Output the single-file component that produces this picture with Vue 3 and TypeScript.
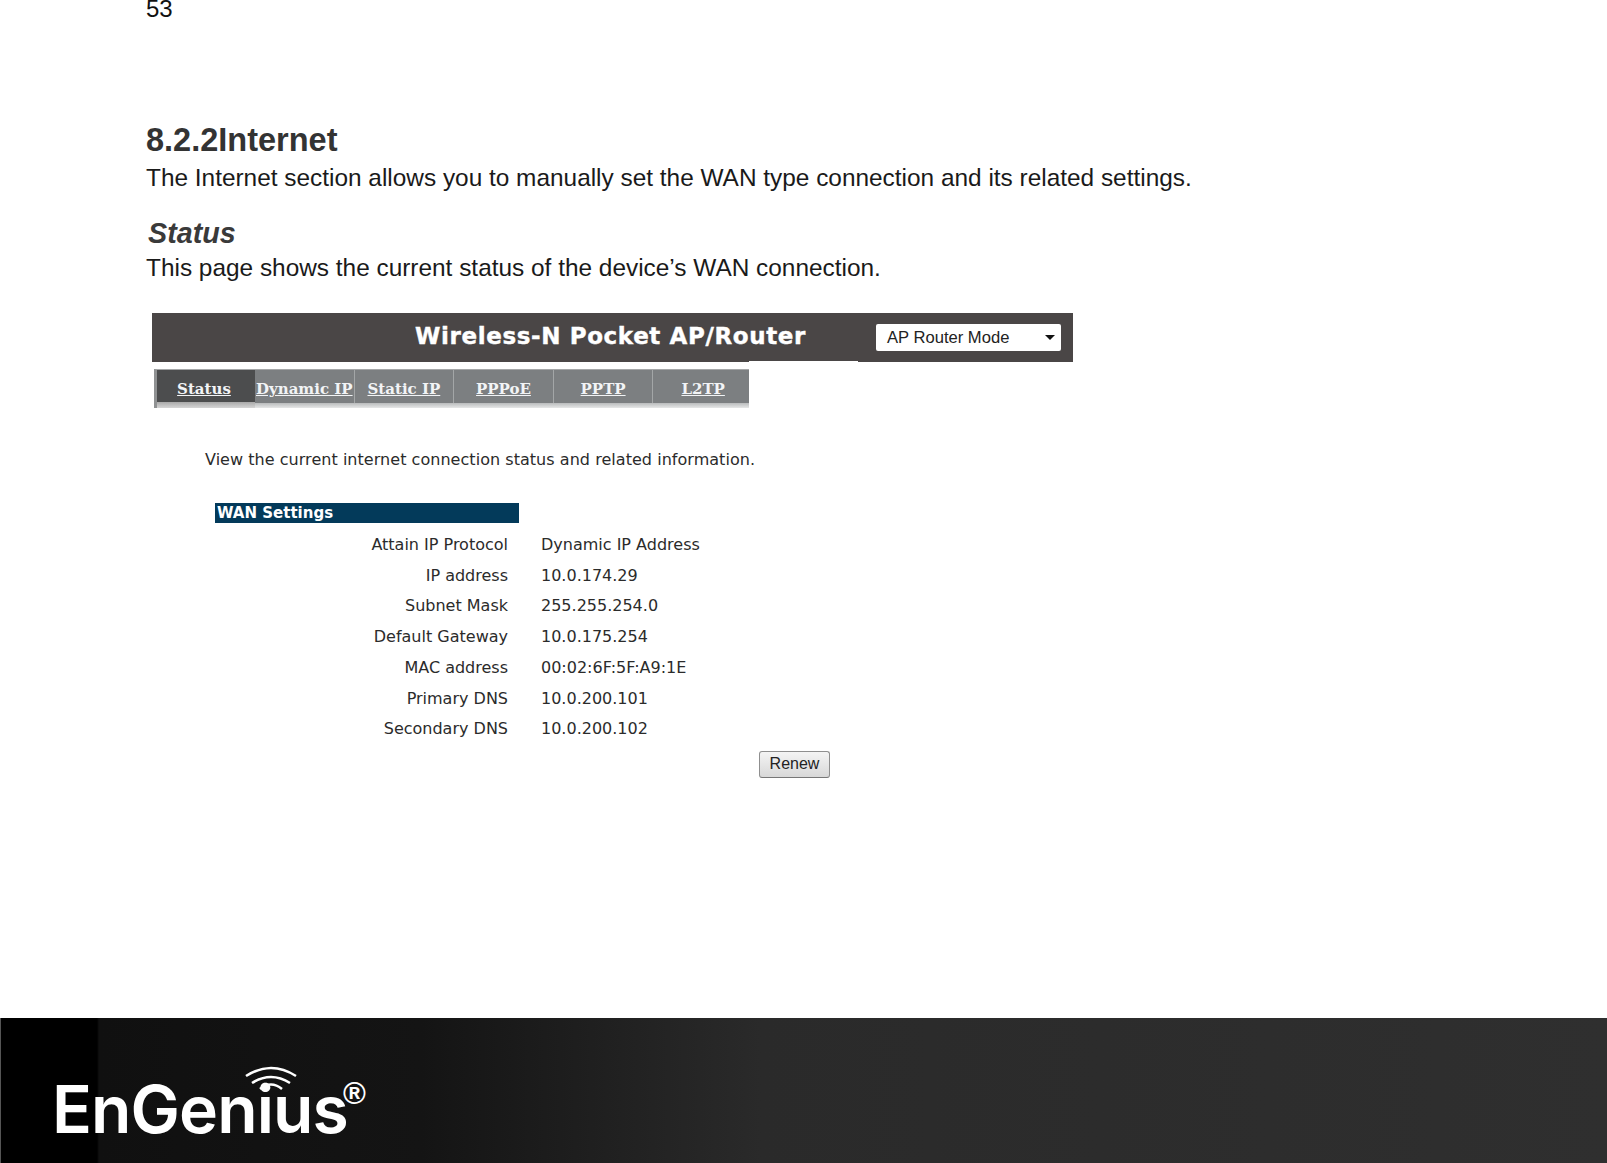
<template>
  <div class="page">
    <main class="doc">
      <div class="page-no">53</div>
      <h1 class="title">8.2.2Internet</h1>
      <p class="body-text first">The Internet section allows you to manually set the WAN type connection and its related settings.</p>
      <h2 class="subtitle">Status</h2>
      <p class="body-text">This page shows the current status of the device’s WAN connection.</p>

      <section class="shot">
        <div class="banner">
          <div class="banner-title">Wireless-N Pocket AP/Router</div>
          <div class="mode-select">
            <span>AP Router Mode</span>
            <i class="caret"></i>
          </div>
          <div class="banner-notch"></div>
        </div>

        <nav class="tabs">
          <a v-for="(t, i) in tabs" :key="t" class="tab" :class="{ active: i === 0 }">{{ t }}</a>
        </nav>

        <p class="intro">View the current internet connection status and related information.</p>

        <div class="wan-head">WAN Settings</div>
        <div class="wan-table">
          <template v-for="r in rows" :key="r[0]">
            <div class="label">{{ r[0] }}</div>
            <div class="value">{{ r[1] }}</div>
          </template>
        </div>
        <div class="btn-row">
          <button class="renew">Renew</button>
        </div>
      </section>
    </main>

    <footer class="footer">
      <div class="logo">
        <span class="logo-text">EnGenius</span>
        <span class="logo-reg">®</span>
        <svg class="wifi" width="60" height="30" viewBox="0 0 60 30" fill="none" stroke="#fff" stroke-width="2.6">
          <path d="M5 11 Q30 -5 55 11" />
          <path d="M11 18 Q30 6 49 18" />
          <path d="M19 24 Q30 15 41 24" />
        </svg>
      </div>
    </footer>
  </div>
</template>

<script setup lang="ts">
const tabs: string[] = ['Status', 'Dynamic IP', 'Static IP', 'PPPoE', 'PPTP', 'L2TP']

const rows: [string, string][] = [
  ['Attain IP Protocol', 'Dynamic IP Address'],
  ['IP address', '10.0.174.29'],
  ['Subnet Mask', '255.255.254.0'],
  ['Default Gateway', '10.0.175.254'],
  ['MAC address', '00:02:6F:5F:A9:1E'],
  ['Primary DNS', '10.0.200.101'],
  ['Secondary DNS', '10.0.200.102'],
]
</script>

<style>
html,
body {
  margin: 0;
  background: #fff;
}
</style>

<style scoped>
.page {
  width: 1607px;
  height: 1163px;
  display: flex;
  flex-direction: column;
  overflow: hidden;
  font-family: 'Liberation Sans', Arial, sans-serif;
  background: #fff;
}

.doc {
  flex: 1;
  padding-left: 146px;
}

.page-no {
  height: 20px;
  font-size: 24px;
  line-height: 18px;
  color: #111;
}

.title {
  margin: 99px 0 0;
  font-size: 32.5px;
  line-height: 42px;
  font-weight: 700;
  color: #333;
}

.body-text {
  margin: 0;
  font-size: 24.4px;
  line-height: 32px;
  color: #1a1a1a;
}

.body-text.first {
  margin-top: 1px;
}

.subtitle {
  margin: 21px 0 1px 2px;
  font-size: 28.7px;
  line-height: 36px;
  font-weight: 700;
  font-style: italic;
  color: #3a3a3a;
}

.shot {
  margin: 29px 0 0 6px;
  width: 921px;
}

.banner {
  position: relative;
  height: 49px;
  background: #4a4646;
  display: flex;
  align-items: center;
  padding-left: 263px;
}

.banner-title {
  width: 461px;
  margin-top: -4px;
  font-family: 'DejaVu Sans', sans-serif;
  font-weight: 700;
  font-size: 23px;
  letter-spacing: 0.62px;
  -webkit-text-stroke: 0.4px #fff;
  color: #fff;
}

.banner-notch {
  position: absolute;
  left: 597px;
  bottom: 0;
  width: 109px;
  height: 1px;
  background: #fff;
}

.mode-select {
  width: 185px;
  height: 27px;
  box-sizing: border-box;
  background: #fff;
  border-radius: 2px;
  display: flex;
  align-items: center;
  justify-content: space-between;
  padding: 0 6px 0 11px;
  font-size: 16.6px;
  color: #222;
}

.caret {
  width: 0;
  height: 0;
  border-left: 5px solid transparent;
  border-right: 5px solid transparent;
  border-top: 5px solid #111;
}

.tabs {
  margin: 7px 0 0 2px;
  width: 595px;
  height: 39px;
  box-sizing: border-box;
  display: flex;
  background: linear-gradient(#7c7f81 0 33px, #b9bbbc 33px, #e6e7e7 100%);
  border-top: 1px solid #a5a7a8;
  border-left: 3px solid #8f9192;
}

.tab {
  flex: 0 0 99.6px;
  min-width: 0;
  box-sizing: border-box;
  height: 33px;
  padding-top: 4px;
  border-right: 1px solid #a3a6a7;
  display: flex;
  align-items: center;
  justify-content: center;
  font-family: 'DejaVu Serif', serif;
  font-weight: 700;
  font-size: 15px;
  white-space: nowrap;
  color: #f2f4f6;
  text-decoration: underline;
}

.tab.active {
  flex-basis: 98px;
  height: 38px;
  padding: 4px 4px 5px 0;
  background: linear-gradient(#4c4d4e 0 32px, #a9a9a9 32px, #d6d6d6 100%);
  border-right: 0;
}

.tab:last-child {
  border-right: 0;
}

.intro {
  margin: 41px 0 0 53px;
  font-family: 'DejaVu Sans', sans-serif;
  font-size: 16px;
  letter-spacing: 0.04px;
  line-height: 22px;
  color: #2b2b2b;
}

.wan-head {
  margin: 32px 0 0 63px;
  width: 304px;
  height: 20px;
  line-height: 20px;
  box-sizing: border-box;
  padding-left: 2px;
  background: #033a5a;
  font-family: 'DejaVu Sans', sans-serif;
  font-weight: 700;
  font-size: 15px;
  white-space: nowrap;
  color: #fff;
}

.wan-table {
  margin-top: 6px;
  display: grid;
  grid-template-columns: 356px auto;
  grid-auto-rows: 30.75px;
  column-gap: 33px;
  align-items: center;
  font-family: 'DejaVu Sans', sans-serif;
  font-size: 16px;
  color: #2b2b2b;
}

.label {
  text-align: right;
}

.btn-row {
  margin: 7px 0 0 607px;
}

.renew {
  display: block;
  width: 71px;
  height: 27px;
  padding: 0 0 2px;
  border: 1px solid #8f8f8f;
  border-bottom-color: #777;
  border-radius: 3px;
  background: linear-gradient(#f4f4f4, #d8d8d8);
  font-family: 'Liberation Sans', Arial, sans-serif;
  font-size: 16px;
  color: #222;
}

.footer {
  height: 145px;
  flex: none;
  box-sizing: border-box;
  border-left: 1px solid #555;
  padding: 51px 0 0 51px;
  background: linear-gradient(90deg, #000 0 96px, #101010 98px, #141414 420px, #2a2a2a 760px, #2f2f2f 100%);
}

.logo {
  position: relative;
  width: 320px;
  height: 80px;
  color: #fff;
}

.logo-text {
  font-family: Inter, 'Open Sans', sans-serif;
  font-weight: 600;
  font-size: 66px;
  line-height: 80px;
  letter-spacing: -0.9px;
}

.logo-reg {
  position: absolute;
  left: 291px;
  top: 8px;
  font-family: 'Liberation Sans', Arial, sans-serif;
  font-weight: 700;
  font-size: 31px;
  line-height: 34px;
}

.wifi {
  position: absolute;
  left: 189px;
  top: -4px;
}
</style>
